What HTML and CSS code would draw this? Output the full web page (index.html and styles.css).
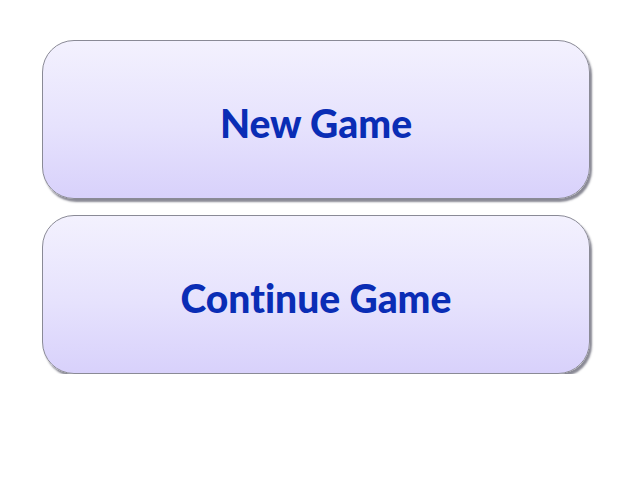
FILE: index.html
```html
<!DOCTYPE html>
<html lang="en">
<head>
    <meta charset="UTF-8">
    <meta name="viewport" content="width=device-width, initial-scale=1.0">
    <title>Menu</title>
    <link rel="stylesheet" href="styles.css">
</head>
<body>
    <div class="menu">
        <button class="menu-btn" type="button">New Game</button>
        <button class="menu-btn" type="button">Continue Game</button>
    </div>
</body>
</html>
```

FILE: styles.css
```css
body {
    margin: 0;
    background: #ffffff;
    font-family: Lato, "DejaVu Sans", sans-serif;
}

.menu {
    display: flex;
    flex-direction: column;
    gap: 16px;
    padding: 40px 0 0 42px;
}

/* Big rounded menu buttons */
.menu-btn {
    width: 548px;
    height: 159px;
    box-sizing: border-box;
    border: 1.5px solid #8a8a96;
    border-radius: 32px;
    background: linear-gradient(to bottom, #f3f1fe 0%, #e6e2fd 55%, #d8d1fb 100%);
    box-shadow: 2px 3px 2px rgba(40, 40, 60, 0.55);
    color: #0a2db5;
    font-family: inherit;
    font-size: 39px;
    font-weight: 900;
    font-variant-ligatures: none;
    cursor: pointer;
    padding: 6px 0 0;
}

.menu-btn:hover {
    background: linear-gradient(to bottom, #eeebfe 0%, #dcd5fc 100%);
}
```
